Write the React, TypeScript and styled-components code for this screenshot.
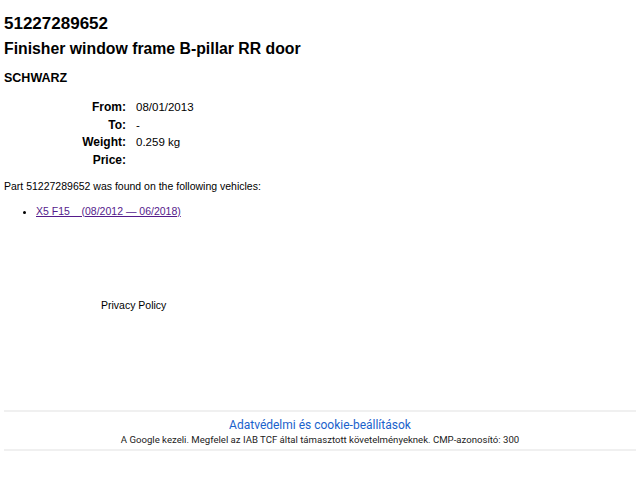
import React from 'react';
import styled, { createGlobalStyle } from 'styled-components';

const GlobalStyle = createGlobalStyle`
  html, body {
    margin: 0;
    padding: 0;
    background: #ffffff;
  }
  body {
    font-family: 'Liberation Sans', Arial, sans-serif;
    color: #000;
  }
`;

const Page = styled.div`
  width: 640px;
  height: 480px;
  padding: 0 4px;
  box-sizing: border-box;
  display: flex;
  flex-direction: column;
`;

const PartNumber = styled.h1`
  margin: 14px 0 0;
  font-size: 17px;
  line-height: 20px;
  font-weight: 700;
`;

const PartName = styled.h2`
  margin: 4px 0 0;
  font-size: 15.8px;
  line-height: 22px;
  font-weight: 700;
`;

const Colour = styled.h3`
  margin: 10px 0 0;
  font-size: 12.5px;
  line-height: 16px;
  font-weight: 700;
`;

const Specs = styled.dl`
  margin: 13px 0 0;
  display: grid;
  grid-template-columns: 122px 1fr;
  column-gap: 10px;
  font-size: 12px;
  line-height: 17.5px;
`;

const SpecLabel = styled.dt`
  text-align: right;
  font-weight: 700;
`;

const SpecValue = styled.dd`
  margin: 0;
  font-size: 11.5px;
`;

const Note = styled.p`
  margin: 10px 0 0;
  font-size: 10.5px;
  line-height: 14px;
`;

const VehicleList = styled.ul`
  margin: 11px 0 0;
  padding-left: 32px;
  font-size: 10.5px;
  line-height: 14px;
`;

const VehicleLink = styled.a`
  color: #551a8b;
  text-decoration: underline;
  white-space: pre;
`;

const PolicyLink = styled.div`
  margin: 80px 0 0 97px;
  font-size: 10.5px;
  line-height: 14px;
`;

const ConsentBar = styled.footer`
  margin-top: auto;
  margin-bottom: 29px;
  border-top: 2px solid #f0f0f0;
  border-bottom: 2px solid #f0f0f0;
  padding: 5px 0 3px;
  text-align: center;
  font-family: Roboto, 'Noto Sans', sans-serif;
`;

const ConsentTitle = styled.div`
  color: #1a62cc;
  font-size: 12px;
  line-height: 16px;
`;

const ConsentText = styled.div`
  color: #222;
  font-size: 9.6px;
  line-height: 13px;
`;

const specs = [
  { label: 'From:', value: '08/01/2013' },
  { label: 'To:', value: '-' },
  { label: 'Weight:', value: '0.259 kg' },
  { label: 'Price:', value: '' },
];

const App: React.FC = () => {
  return (
    <>
      <GlobalStyle />
      <Page>
        <PartNumber>51227289652</PartNumber>
        <PartName>Finisher window frame B-pillar RR door</PartName>
        <Colour>SCHWARZ</Colour>
        <Specs>
          {specs.map((s) => (
            <React.Fragment key={s.label}>
              <SpecLabel>{s.label}</SpecLabel>
              <SpecValue>{s.value}</SpecValue>
            </React.Fragment>
          ))}
        </Specs>
        <Note>Part 51227289652 was found on the following vehicles:</Note>
        <VehicleList>
          <li>
            <VehicleLink href="#">{'X5 F15    (08/2012 — 06/2018)'}</VehicleLink>
          </li>
        </VehicleList>
        <PolicyLink>Privacy Policy</PolicyLink>
        <ConsentBar>
          <ConsentTitle>Adatvédelmi és cookie-beállítások</ConsentTitle>
          <ConsentText>
            A Google kezeli. Megfelel az IAB TCF által támasztott követelményeknek. CMP-azonosító: 300
          </ConsentText>
        </ConsentBar>
      </Page>
    </>
  );
};

export default App;
